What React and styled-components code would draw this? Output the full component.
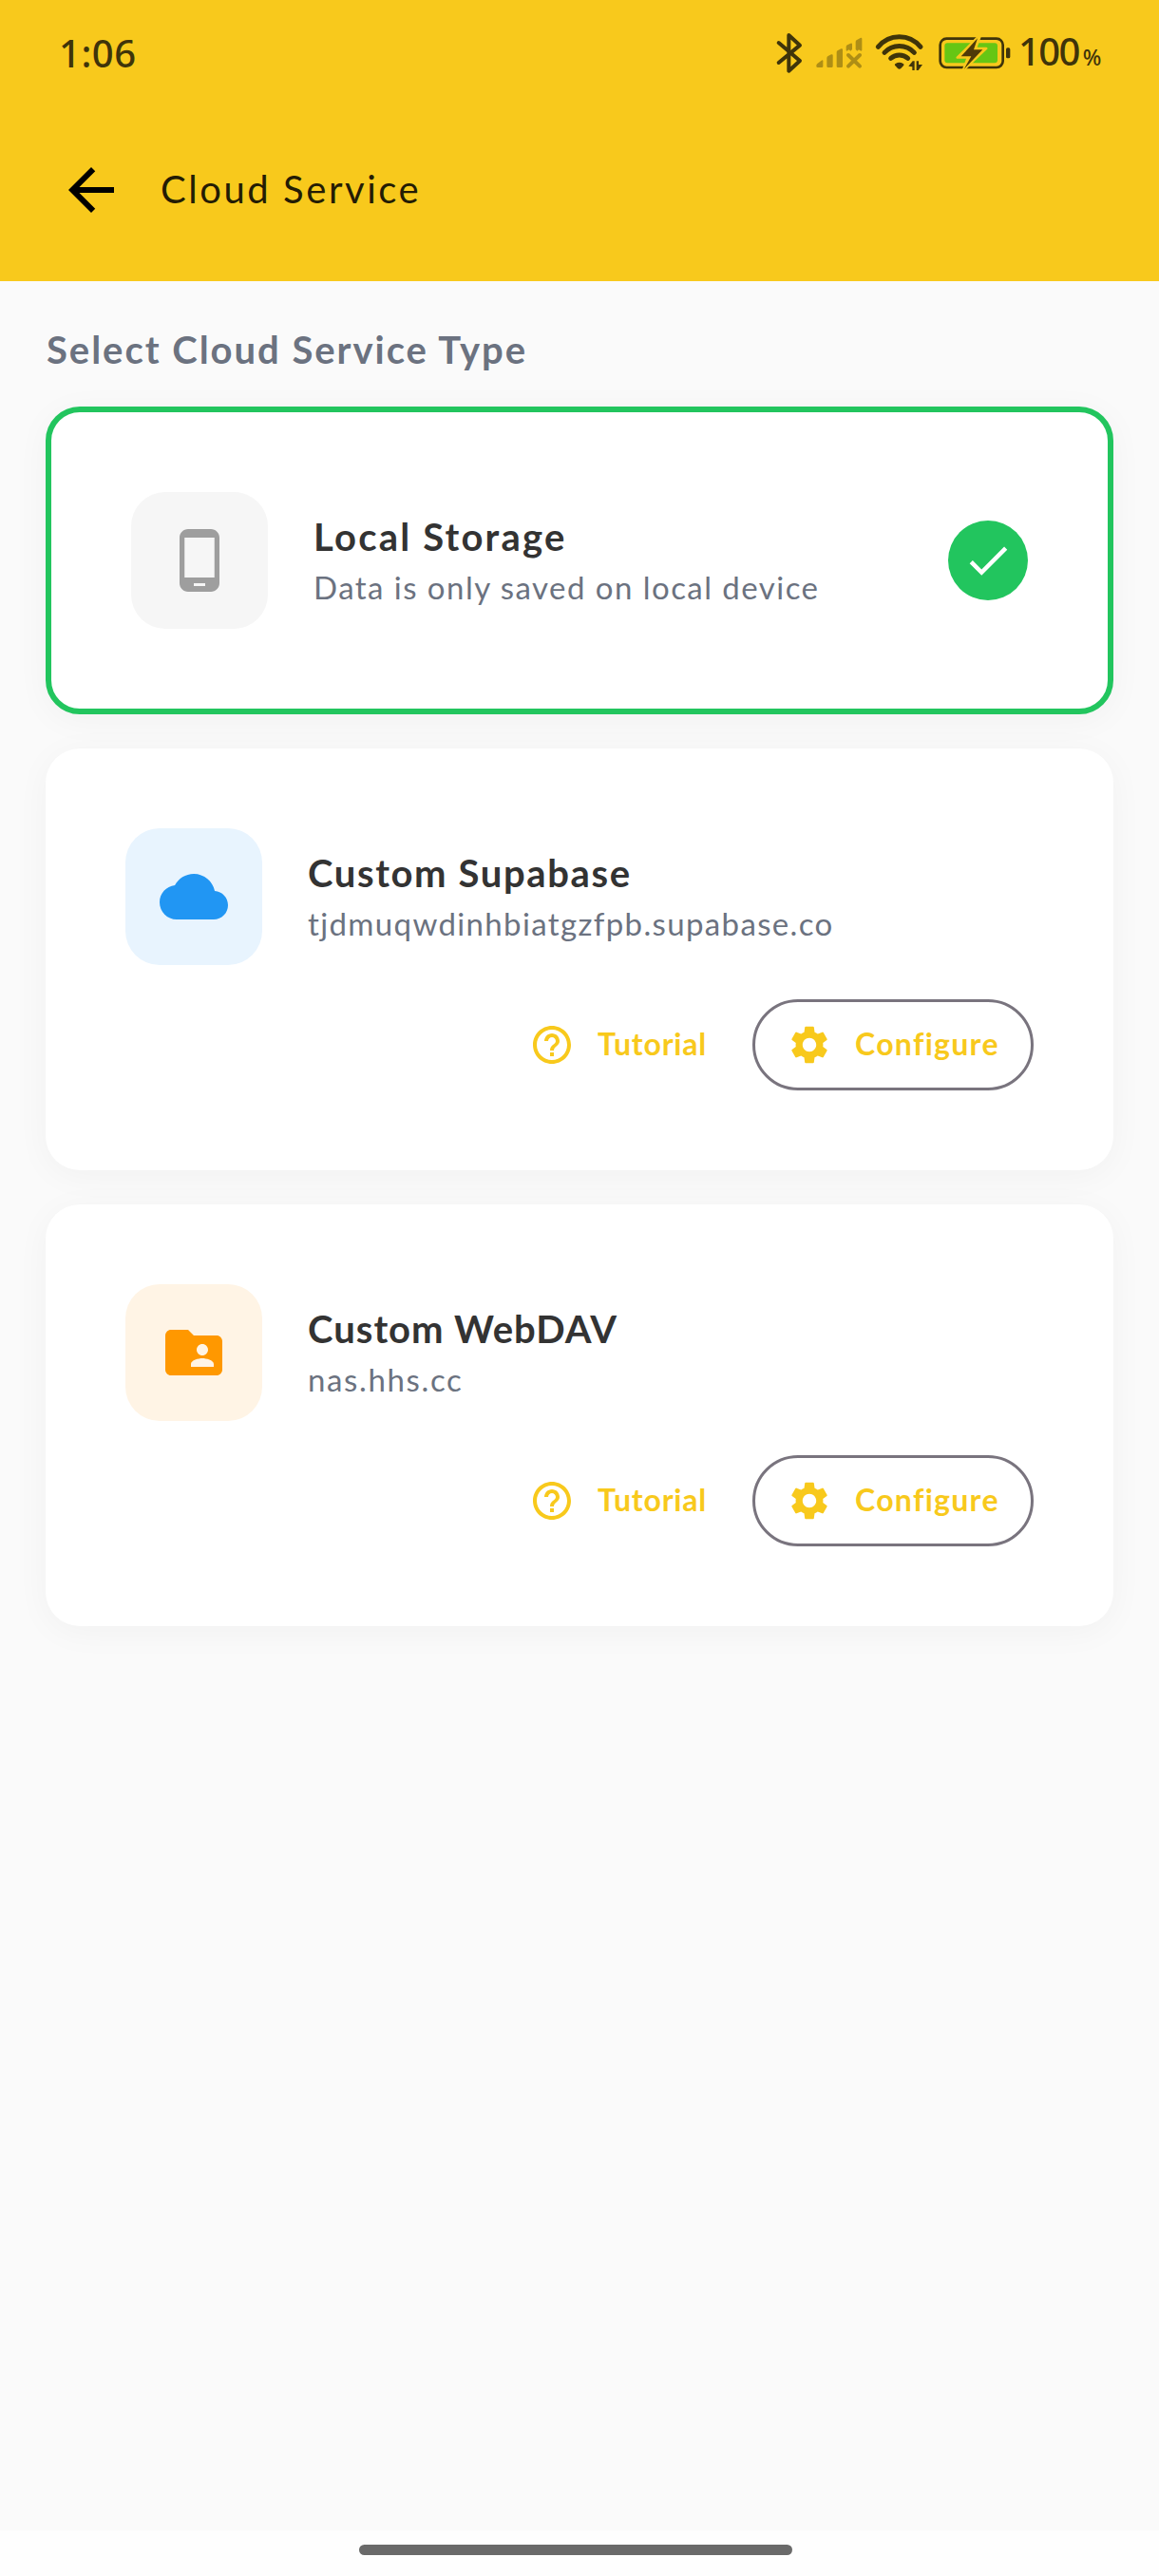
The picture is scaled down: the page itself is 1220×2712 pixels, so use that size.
import React from "react";
import styled, { createGlobalStyle } from "styled-components";
import {
  MdArrowBack,
  MdCheck,
  MdFolderShared,
  MdHelpOutline,
  MdPhoneAndroid,
  MdSettings,
} from "react-icons/md";

const GlobalStyle = createGlobalStyle`
  * { box-sizing: border-box; }
  body { margin: 0; background: #fafafa; }
`;

const ink = "#3f340a";
const brand = "#f8c91c";

const Screen = styled.div`
  display: flex;
  flex-direction: column;
  width: 1220px;
  height: 2712px;
  background: #fafafa;
  font-family: Lato, "Noto Sans", sans-serif;
`;

const Header = styled.header`
  flex: none;
  height: 296px;
  background: ${brand};
`;

const StatusBar = styled.div`
  display: flex;
  align-items: center;
  justify-content: space-between;
  height: 104px;
  padding: 8px 62px 0;
  color: ${ink};
  font-family: "Noto Sans", sans-serif;
  font-weight: 500;
`;

const Clock = styled.span`
  font-size: 40px;
  line-height: 48px;
  letter-spacing: 0.5px;
  padding-bottom: 1px;
`;

const StatusIcons = styled.div`
  display: flex;
  align-items: center;
`;

const StatusIcon = styled.svg`
  display: block;
  flex: none;
  overflow: visible;
  margin-right: ${(p) => p.$gap}px;
`;

const BatteryLevel = styled.span`
  display: flex;
  align-items: baseline;
  gap: 4px;
  width: 86px;
  font-size: 40px;
  line-height: 48px;
  letter-spacing: -1.6px;
  padding-top: 2px;
`;

const Percent = styled.small`
  font-size: 23px;
  letter-spacing: 0;
`;

const AppBar = styled.div`
  display: flex;
  align-items: center;
  height: 192px;
  padding-left: 60px;
`;

const BackButton = styled.button`
  display: flex;
  padding: 0;
  border: 0;
  background: none;
  color: #000;
  font-size: 72px;
`;

const PageTitle = styled.h1`
  margin: 0 0 2px 37px;
  font-size: 40px;
  line-height: 48px;
  font-weight: 400;
  letter-spacing: 2.55px;
  color: #241c04;
`;

const Content = styled.main`
  flex: 1;
  padding: 48px 48px 0;
`;

const SectionTitle = styled.h2`
  margin: 0 0 36px 1px;
  font-size: 40px;
  line-height: 48px;
  font-weight: 700;
  letter-spacing: 1.97px;
  color: #6b7280;
`;

const CardList = styled.div`
  display: flex;
  flex-direction: column;
  gap: 36px;
`;

const Card = styled.section`
  display: flex;
  flex-direction: column;
  gap: 36px;
  padding: 84px;
  border: ${(p) => (p.$selected ? "6px solid #22c55e" : "0")};
  border-radius: 36px;
  background: #fff;
  box-shadow: 0 6px 36px rgba(0, 0, 0, 0.04);
`;

const ServiceRow = styled.div`
  display: flex;
  align-items: center;
  gap: 48px;
`;

const IconTile = styled.div`
  display: flex;
  align-items: center;
  justify-content: center;
  flex: none;
  width: 144px;
  height: 144px;
  border-radius: 36px;
  background: ${(p) => p.$bg};
  color: ${(p) => p.$color};
  font-size: 72px;
`;

const ServiceText = styled.div`
  flex: 1;
  display: flex;
  flex-direction: column;
  gap: 7px;
  padding-top: 1px;
`;

const ServiceName = styled.h3`
  margin: 0;
  font-size: 40px;
  line-height: 48px;
  font-weight: 700;
  letter-spacing: ${(p) => p.$tracking}px;
  color: #333;
`;

const ServiceDetail = styled.p`
  margin: 0;
  font-size: 33px;
  line-height: 44px;
  letter-spacing: ${(p) => p.$tracking}px;
  color: #6b7280;
`;

const SelectedBadge = styled.div`
  display: flex;
  align-items: center;
  justify-content: center;
  width: 84px;
  height: 84px;
  border-radius: 50%;
  background: #22c55e;
  color: #fff;
  font-size: 54px;
`;

const Actions = styled.div`
  display: flex;
  justify-content: flex-end;
  gap: 24px;
`;

const ActionButton = styled.button`
  display: flex;
  align-items: center;
  gap: 24px;
  width: ${(p) => (p.$outlined ? 296 : 235)}px;
  height: 96px;
  padding: 0 0 0 ${(p) => (p.$outlined ? 33 : 24)}px;
  border: ${(p) => (p.$outlined ? "3px solid #79747e" : "0")};
  border-radius: 48px;
  background: none;
  color: ${brand};
  font-family: inherit;

  svg {
    flex: none;
    font-size: 48px;
  }
`;

const ActionLabel = styled.span`
  padding-bottom: 2px;
  font-size: 32px;
  line-height: 40px;
  font-weight: 700;
  letter-spacing: ${(p) => p.$tracking}px;
`;

const NavigationBar = styled.footer`
  display: flex;
  justify-content: center;
  flex: none;
  height: 48px;
  padding: 15px 8px 0 0;
  background: #fefefe;
`;

const HomeHandle = styled.div`
  width: 456px;
  height: 11px;
  border-radius: 6px;
  background: #6a6a6a;
`;

const BluetoothIcon = () => (
  <StatusIcon $gap={15} width="26" height="42" viewBox="58 43 78 126">
    <path
      d="M63 73 130 130 95 162V49L130 81 63 136"
      fill="none"
      stroke={ink}
      strokeWidth="12"
      strokeLinecap="round"
      strokeLinejoin="round"
    />
  </StatusIcon>
);

const SignalIcon = () => (
  <StatusIcon $gap={13} width="49" height="42" viewBox="121 17 147 126">
    <g fill="#ae8e15">
      <path d="M122 119Q122 115 126 112L138 103Q143 100 143 105V121Q143 125 139 125H126Q122 125 122 121Z" />
      <path d="M155 95Q155 91 159 89L169 84Q174 82 174 87V121Q174 125 170 125H159Q155 125 155 121Z" />
      <path d="M186 77Q186 73 190 71L200 66Q205 64 205 69V121Q205 125 201 125H190Q186 125 186 121Z" />
      <path d="M216 60Q216 56 220 54L230 49Q235 47 235 52V68L230 73 225 69 218 73 216 71Z" />
      <path d="M246 44Q246 40 250 38L261 32Q266 30 266 35V71L263 73 256 69 251 73 246 68Z" />
    </g>
    <path
      d="M223 86 259 121M259 86 223 121"
      stroke="#ae8e15"
      strokeWidth="12"
      strokeLinecap="round"
    />
  </StatusIcon>
);

const WifiIcon = () => (
  <StatusIcon $gap={16} width="51" height="42" viewBox="305 17 153 126">
    <g fill="none" stroke={ink} strokeWidth="15" strokeLinecap="round">
      <path d="M315 60A86 86 0 0 1 449 60" />
      <path d="M335 78A64 64 0 0 1 429 78" />
      <path d="M355 96A42 42 0 0 1 409 96" />
    </g>
    <path
      d="M368 118Q366 115 370 113 382 106 394 113 398 115 396 118L387 128Q382 133 377 128Z"
      fill={ink}
    />
    <path
      d="M411 121 424 105H430V134H423V123ZM436 105H443V116H455L442 134H436Z"
      fill={ink}
      stroke={brand}
      strokeWidth="2"
      paintOrder="stroke"
    />
  </StatusIcon>
);

const BatteryIcon = () => (
  <StatusIcon $gap={8} width="76" height="42" viewBox="566 44 228 126">
    <rect x="571" y="61" width="198" height="91" rx="20" fill="none" stroke={ink} strokeWidth="8" />
    <rect x="585" y="75" width="167" height="63" rx="9" fill="#66c614" />
    <rect x="779" y="90" width="13" height="33" rx="5" fill={ink} />
    <path
      d="M688 58 625 121H658L643 162 717 92H683L697 54Z"
      fill={brand}
      stroke={brand}
      strokeWidth="7"
      strokeLinejoin="round"
    />
    <path d="M689 60 637 117H669L646 158 705 96H677Z" fill="#4e3a08" />
  </StatusIcon>
);

const CloudIcon = () => (
  <svg width="72" height="72" viewBox="0 0 24 24" fill="currentColor">
    <path d="M19.35 10.04C18.67 6.59 15.64 4 12 4 9.11 4 6.6 5.64 5.35 8.04 2.34 8.36 0 10.91 0 14c0 3.31 2.69 6 6 6h13c2.76 0 5-2.24 5-5 0-2.64-2.05-4.78-4.65-4.96z" />
  </svg>
);

const services = [
  {
    name: "Local Storage",
    nameTracking: 2.21,
    detail: "Data is only saved on local device",
    detailTracking: 1.46,
    icon: <MdPhoneAndroid />,
    color: "#9e9e9e",
    tile: "#f6f6f6",
    selected: true,
  },
  {
    name: "Custom Supabase",
    nameTracking: 1.62,
    detail: "tjdmuqwdinhbiatgzfpb.supabase.co",
    detailTracking: 1.36,
    icon: <CloudIcon />,
    color: "#2196f3",
    tile: "#e8f4fe",
    configurable: true,
  },
  {
    name: "Custom WebDAV",
    nameTracking: 1.02,
    detail: "nas.hhs.cc",
    detailTracking: 1.65,
    icon: <MdFolderShared />,
    color: "#ff9800",
    tile: "#fff4e5",
    configurable: true,
  },
];

function ServiceCard({ service }) {
  return (
    <Card $selected={service.selected}>
      <ServiceRow>
        <IconTile $bg={service.tile} $color={service.color}>
          {service.icon}
        </IconTile>
        <ServiceText>
          <ServiceName $tracking={service.nameTracking}>{service.name}</ServiceName>
          <ServiceDetail $tracking={service.detailTracking}>{service.detail}</ServiceDetail>
        </ServiceText>
        {service.selected && (
          <SelectedBadge>
            <MdCheck />
          </SelectedBadge>
        )}
      </ServiceRow>
      {service.configurable && (
        <Actions>
          <ActionButton>
            <MdHelpOutline />
            <ActionLabel $tracking={0.8}>Tutorial</ActionLabel>
          </ActionButton>
          <ActionButton $outlined>
            <MdSettings />
            <ActionLabel $tracking={1.3}>Configure</ActionLabel>
          </ActionButton>
        </Actions>
      )}
    </Card>
  );
}

export default function App() {
  return (
    <Screen>
      <GlobalStyle />
      <Header>
        <StatusBar>
          <Clock>1:06</Clock>
          <StatusIcons>
            <BluetoothIcon />
            <SignalIcon />
            <WifiIcon />
            <BatteryIcon />
            <BatteryLevel>
              100<Percent>%</Percent>
            </BatteryLevel>
          </StatusIcons>
        </StatusBar>
        <AppBar>
          <BackButton aria-label="Back">
            <MdArrowBack />
          </BackButton>
          <PageTitle>Cloud Service</PageTitle>
        </AppBar>
      </Header>
      <Content>
        <SectionTitle>Select Cloud Service Type</SectionTitle>
        <CardList>
          {services.map((service) => (
            <ServiceCard key={service.name} service={service} />
          ))}
        </CardList>
      </Content>
      <NavigationBar>
        <HomeHandle />
      </NavigationBar>
    </Screen>
  );
}
